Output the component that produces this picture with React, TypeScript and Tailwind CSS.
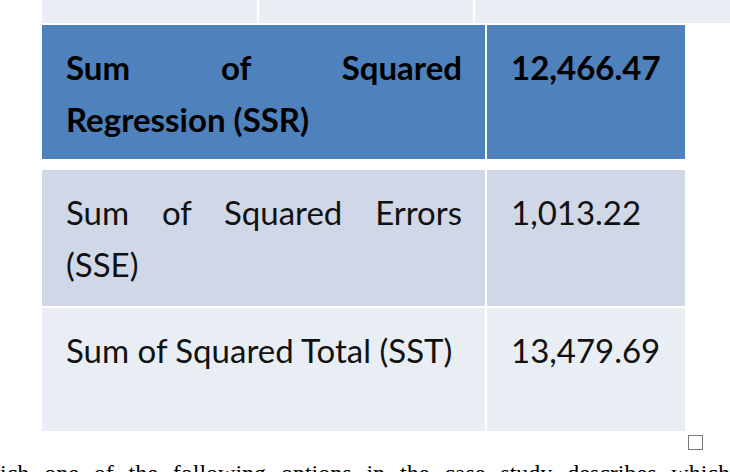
const rows = [
  { label: "Sum of Squared Regression (SSR)", value: "12,466.47", bg: "bg-[#4f81bd]", h: "h-[134px]", bold: true },
  { label: "Sum of Squared Errors (SSE)", value: "1,013.22", bg: "bg-[#d0d8e8]", h: "h-[136px]", bold: false },
  { label: "Sum of Squared Total (SST)", value: "13,479.69", bg: "bg-[#e9edf4]", h: "h-[123px]", bold: false },
];

function Row({ r }: { r: (typeof rows)[number] }) {
  const txt = r.bold ? "font-bold text-black" : "text-[#111]";
  return (
    <div className={`flex ${r.h} ${r.bg}`}>
      <div className="w-[445px] border-r-2 border-white pl-[24px] pr-[23px] pt-[16px]">
        <p className={`text-[33px] leading-[52px] text-justify ${txt}`}>{r.label}</p>
      </div>
      <div className="flex-1 pl-[24px] pt-[16px]">
        <p className={`text-[33px] leading-[52px] ${txt}`}>{r.value}</p>
      </div>
    </div>
  );
}

export default function App() {
  return (
    <div className="w-[730px] h-[472px] overflow-hidden bg-white" style={{ fontFamily: "Lato, 'Open Sans', sans-serif" }}>
      {/* tail of the row above */}
      <div className="ml-[42px] flex gap-[2px] h-[23px]">
        <div className="w-[215px] bg-[#e9edf4]" />
        <div className="w-[214px] bg-[#e9edf4]" />
        <div className="flex-1 bg-[#e9edf4]" />
      </div>

      <div className="ml-[42px] w-[643px] mt-[2px]">
        <Row r={rows[0]} />
      </div>

      <div className="ml-[42px] w-[643px] mt-[11px] flex flex-col gap-[2px]">
        <Row r={rows[1]} />
        <Row r={rows[2]} />
      </div>

      <div className="ml-[688px] mt-[4px] w-[15px] h-[15px] border border-[#777] bg-white" />

      <p
        className="mt-[8px] w-[730px] whitespace-nowrap text-[24px] leading-[30px] text-black [text-align-last:justify]"
        style={{ fontFamily: "'Liberation Serif', serif" }}
      >
        ich one of the following options in the case study describes which
      </p>
    </div>
  );
}
